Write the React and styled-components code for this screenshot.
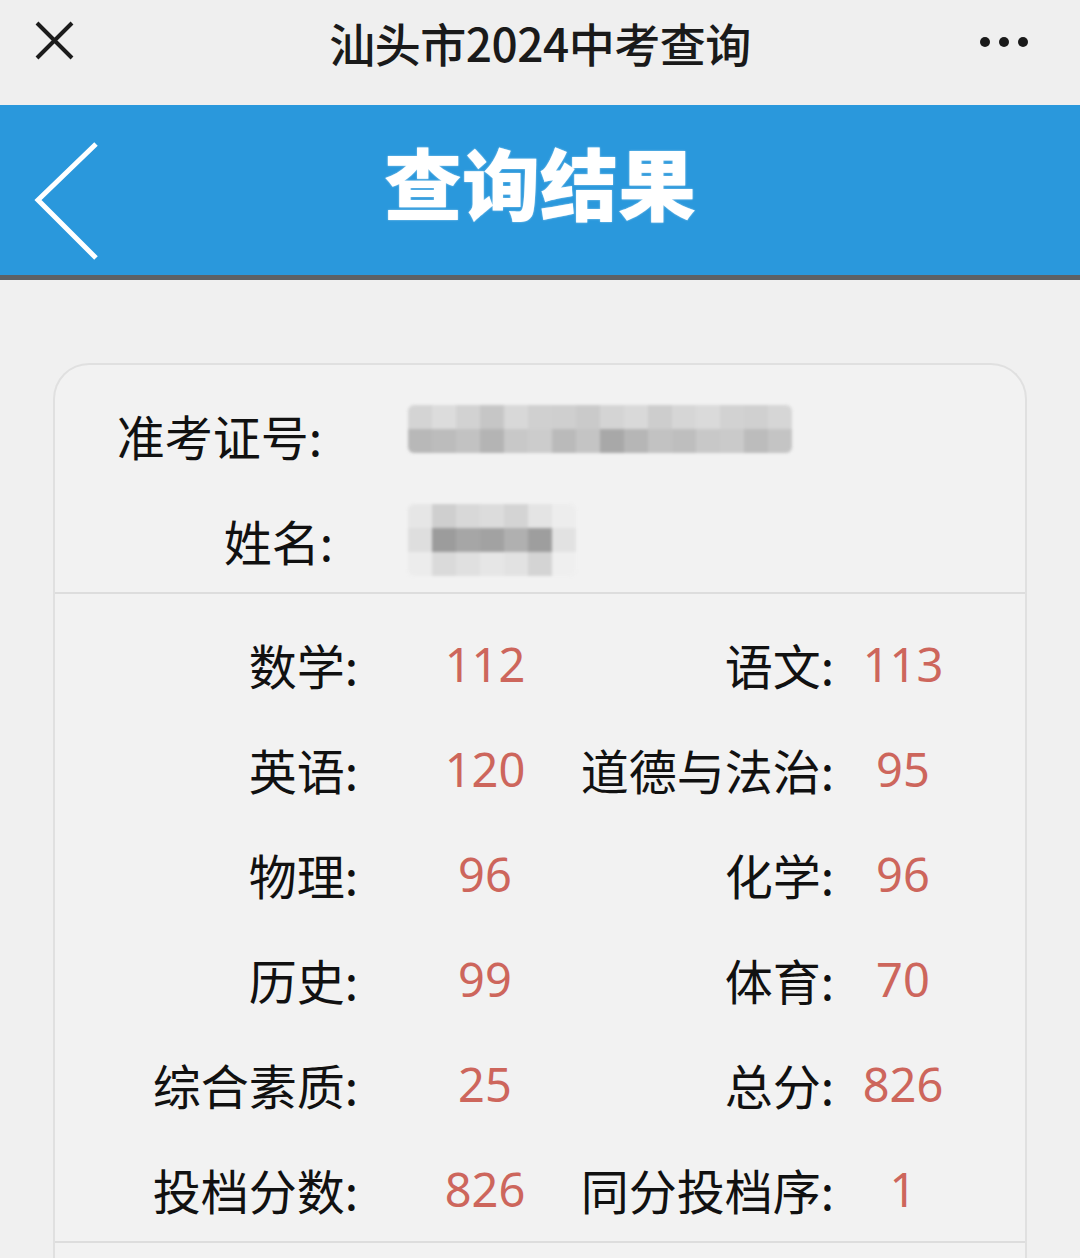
import React from 'react';
import styled, { createGlobalStyle } from 'styled-components';

const GlobalStyle = createGlobalStyle`
    html, body {
        margin: 0;
        padding: 0;
        background: #f0f0f0;
    }
    * {
        box-sizing: border-box;
    }
`;

const CJK = `"Noto Sans CJK SC", "Noto Sans", sans-serif`;
const NUM = `"Noto Sans", "Noto Sans CJK SC", sans-serif`;

const scores = [
    ['数学:', '112', '语文:', '113'],
    ['英语:', '120', '道德与法治:', '95'],
    ['物理:', '96', '化学:', '96'],
    ['历史:', '99', '体育:', '70'],
    ['综合素质:', '25', '总分:', '826'],
    ['投档分数:', '826', '同分投档序:', '1'],
];

// pixelated blur of personal info
const idBlocks = [
    ['#d4d4d4', '#dcdcdc', '#d2d2d2', '#c6c6c6', '#d8d8d8', '#d0d0d0', '#cfcfcf', '#cacaca', '#d4d4d4', '#d9d9d9', '#cdcdcd', '#d6d6d6', '#dadada', '#d2d2d2', '#d0d0d0', '#d6d6d6'],
    ['#b8b8b8', '#bcbcbc', '#c2c2c2', '#b4b4b4', '#c8c8c8', '#cccccc', '#bababa', '#c4c4c4', '#a8a8a8', '#b6b6b6', '#c2c2c2', '#bebebe', '#c8c8c8', '#cacaca', '#bcbcbc', '#c4c4c4'],
];

const nameBlocks = [
    ['#e6e6e6', '#cfcfcf', '#d8d8d8', '#dcdcdc', '#d4d4d4', '#e4e4e4', '#ededed'],
    ['#dedede', '#9c9c9c', '#a6a6a6', '#a2a2a2', '#b0b0b0', '#9e9e9e', '#e2e2e2'],
    ['#ececec', '#dadada', '#e0e0e0', '#e6e6e6', '#e2e2e2', '#d4d4d4', '#efefef'],
];

export default function App() {
    return (
        <Page>
            <GlobalStyle />
            <TopBar>
                <IconButton aria-label="close">
                    <svg width="44" height="44" viewBox="0 0 44 44">
                        <path d="M4 3 L39 38 M39 3 L4 38" stroke="#1c1c1c" strokeWidth="4" fill="none" />
                    </svg>
                </IconButton>
                <TopTitle>汕头市2024中考查询</TopTitle>
                <Dots aria-label="more">
                    <Dot />
                    <Dot />
                    <Dot />
                </Dots>
            </TopBar>

            <Header>
                <BackButton aria-label="back">
                    <svg width="70" height="124" viewBox="0 0 70 124">
                        <path d="M64 4 L6 60 L64 118" stroke="#ffffff" strokeWidth="5" fill="none" />
                    </svg>
                </BackButton>
                <HeaderTitle>查询结果</HeaderTitle>
            </Header>

            <Content>
                <Card>
                    <InfoSection>
                        <InfoRow>
                            <InfoLabel $end={322}>准考证号:</InfoLabel>
                            <Mosaic $cols={16} $size={24} $top={-6}>
                                {idBlocks.flat().map((c, i) => (
                                    <Block key={i} style={{ background: c }} />
                                ))}
                            </Mosaic>
                        </InfoRow>
                        <InfoRow>
                            <InfoLabel $end={333}>姓名:</InfoLabel>
                            <Mosaic $cols={7} $size={24} $top={0}>
                                {nameBlocks.flat().map((c, i) => (
                                    <Block key={i} style={{ background: c }} />
                                ))}
                            </Mosaic>
                        </InfoRow>
                    </InfoSection>

                    <ScoreGrid>
                        {scores.map(([l1, v1, l2, v2]) => (
                            <React.Fragment key={l1}>
                                <ScoreLabel>{l1}</ScoreLabel>
                                <ScoreValue>{v1}</ScoreValue>
                                <ScoreLabel>{l2}</ScoreLabel>
                                <ScoreValue>{v2}</ScoreValue>
                            </React.Fragment>
                        ))}
                    </ScoreGrid>
                    <Divider />
                </Card>
            </Content>
        </Page>
    );
}

const Page = styled.div`
    width: 1080px;
    min-height: 1258px;
    background: #f0f0f0;
    overflow: hidden;
`;

const TopBar = styled.div`
    height: 105px;
    display: grid;
    grid-template-columns: 1fr auto 1fr;
    align-items: center;
    padding: 0 33px 22px 33px;
    background: #efefef;
`;

const IconButton = styled.div`
    width: 44px;
    height: 44px;
    display: flex;
`;

const TopTitle = styled.div`
    font-family: ${CJK};
    font-size: 46px;
    font-weight: 500;
    color: #1a1a1a;
    letter-spacing: -0.5px;
`;

const Dots = styled.div`
    display: flex;
    gap: 9px;
    align-items: center;
    justify-self: end;
    margin-right: 19px;
`;

const Dot = styled.span`
    width: 10px;
    height: 10px;
    border-radius: 50%;
    background: #1a1a1a;
`;

const Header = styled.div`
    height: 175px;
    background: #2a98dc;
    border-bottom: 5px solid #5d6165;
    display: flex;
    align-items: center;
    position: relative;
    justify-content: center;
`;

const BackButton = styled.div`
    position: absolute;
    left: 32px;
    top: 35px;
    display: flex;
`;

const HeaderTitle = styled.h1`
    margin: 0 0 18px 0;
    font-family: ${CJK};
    font-size: 78px;
    font-weight: 800;
    color: #ffffff;
    letter-spacing: 0;
    text-shadow: 0 0 2px rgba(255, 255, 255, 0.6);
`;

const Content = styled.div`
    padding: 83px 53px 0 53px;
`;

const Card = styled.div`
    border: 2px solid #e0e0e0;
    border-bottom: none;
    border-radius: 36px 36px 0 0;
    background: #f2f2f2;
    min-height: 900px;
`;

const InfoSection = styled.div`
    padding-top: 17px;
    border-bottom: 2px solid #dddddd;
`;

const InfoRow = styled.div`
    height: 105px;
    display: flex;
    align-items: center;
    position: relative;
`;

const InfoLabel = styled.div`
    width: ${(p) => p.$end - 55}px;
    font-family: ${CJK};
    font-size: 48px;
    color: #111111;
    flex-shrink: 0;
    white-space: nowrap;
    display: flex;
    justify-content: flex-end;
`;

const Mosaic = styled.div`
    position: absolute;
    left: ${408 - 55}px;
    top: 50%;
    transform: translateY(calc(-50% + ${(p) => p.$top}px));
    display: grid;
    grid-template-columns: repeat(${(p) => p.$cols}, ${(p) => p.$size}px);
    grid-auto-rows: ${(p) => p.$size}px;
    filter: blur(1.5px);
    border-radius: 6px;
    overflow: hidden;
`;

const Block = styled.span`
    display: block;
`;

const ScoreGrid = styled.div`
    padding-top: 17px;
    display: grid;
    grid-template-columns: 303px 254px 222px 138px;
    grid-auto-rows: 105px;
    align-items: center;
`;

const ScoreLabel = styled.div`
    justify-self: end;
    width: max-content;
    font-family: ${CJK};
    font-size: 48px;
    color: #111111;
    white-space: nowrap;
`;

const ScoreValue = styled.div`
    justify-self: center;
    font-family: ${NUM};
    font-size: 47px;
    color: #cd665c;
`;

const Divider = styled.div`
    height: 2px;
    background: #dddddd;
`;
